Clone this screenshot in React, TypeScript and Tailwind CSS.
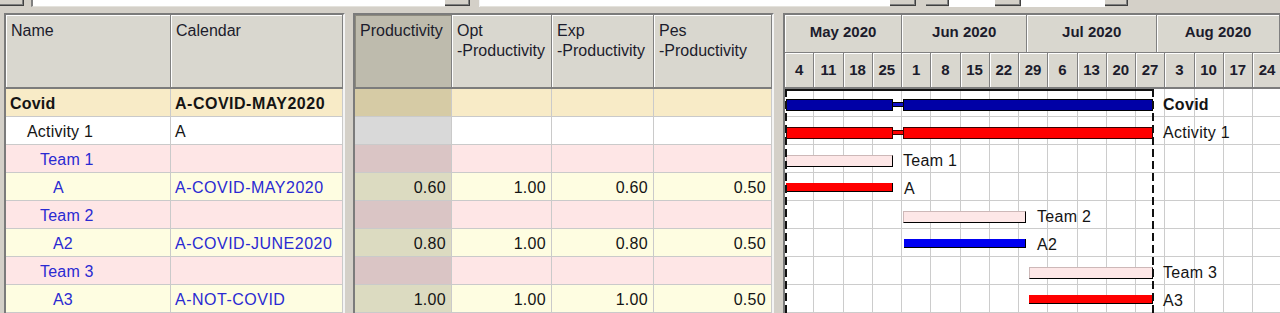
import React from 'react'

type Kind = 'root' | 'activity' | 'team' | 'leaf'

const kindStyle: Record<Kind, { row: string; prod: string; text: string }> = {
  root: { row: 'bg-[#f8ebc7]', prod: 'bg-[#d6cba5]', text: 'text-[#141414] font-bold' },
  activity: { row: 'bg-white', prod: 'bg-[#d9d9d9]', text: 'text-[#141414]' },
  team: { row: 'bg-[#fee6e6]', prod: 'bg-[#dac5c5]', text: 'text-[#2a2ad2]' },
  leaf: { row: 'bg-[#fefde1]', prod: 'bg-[#dcdbc1]', text: 'text-[#2a2ad2]' },
}

const rows: { name: string; indent: string; cal: string; kind: Kind; nums: string[] }[] = [
  { name: 'Covid', indent: 'pl-[4px]', cal: 'A-COVID-MAY2020', kind: 'root', nums: ['', '', '', ''] },
  { name: 'Activity 1', indent: 'pl-[21px]', cal: 'A', kind: 'activity', nums: ['', '', '', ''] },
  { name: 'Team 1', indent: 'pl-[34px]', cal: '', kind: 'team', nums: ['', '', '', ''] },
  { name: 'A', indent: 'pl-[47px]', cal: 'A-COVID-MAY2020', kind: 'leaf', nums: ['0.60', '1.00', '0.60', '0.50'] },
  { name: 'Team 2', indent: 'pl-[34px]', cal: '', kind: 'team', nums: ['', '', '', ''] },
  { name: 'A2', indent: 'pl-[47px]', cal: 'A-COVID-JUNE2020', kind: 'leaf', nums: ['0.80', '1.00', '0.80', '0.50'] },
  { name: 'Team 3', indent: 'pl-[34px]', cal: '', kind: 'team', nums: ['', '', '', ''] },
  { name: 'A3', indent: 'pl-[47px]', cal: 'A-NOT-COVID', kind: 'leaf', nums: ['1.00', '1.00', '1.00', '0.50'] },
]

const days = [4, 11, 18, 25, 1, 8, 15, 22, 29, 6, 13, 20, 27, 3, 10, 17, 24]

type BarKind = 'navy' | 'redSum' | 'team' | 'red' | 'blue'

const barStyle: Record<BarKind, string> = {
  navy: 'top-[10px] h-[12px] bg-[#0000a6] border border-black',
  redSum: 'top-[10px] h-[12px] bg-[#ff0000] border border-[#3a0000]',
  team: 'top-[10px] h-[12px] bg-[#fde7e7] border border-t-[#cdb8b8] border-l-[#cdb8b8] border-b-black border-r-black',
  red: 'top-[10px] h-[9px] bg-[#ff0000] border-b border-r border-black',
  blue: 'top-[10px] h-[9px] bg-[#0000f2] border-b border-r border-black',
}

const linkStyle: Partial<Record<BarKind, string>> = {
  navy: 'bg-[#1010c8] border-y border-black',
  redSum: 'bg-[#ff0000] border-y border-[#3a0000]',
}

const gantt: { kind: BarKind; segs: [number, number][]; label: string; at: number; bold?: boolean }[] = [
  { kind: 'navy', segs: [[1, 107], [118, 250]], label: 'Covid', at: 378, bold: true },
  { kind: 'redSum', segs: [[1, 107], [118, 250]], label: 'Activity 1', at: 378 },
  { kind: 'team', segs: [[1, 107]], label: 'Team 1', at: 118 },
  { kind: 'red', segs: [[1, 107]], label: 'A', at: 119 },
  { kind: 'team', segs: [[118, 123]], label: 'Team 2', at: 252 },
  { kind: 'blue', segs: [[119, 122]], label: 'A2', at: 252 },
  { kind: 'team', segs: [[244, 124]], label: 'Team 3', at: 378 },
  { kind: 'red', segs: [[244, 124]], label: 'A3', at: 378 },
]

const headCell = 'h-full bg-[#d9d7cf] border-r border-[#808080] shadow-[inset_1px_1px_0_#fff] pl-[5px] pt-[6px] leading-[20px] text-[#1c1c2c]'
const btn = 'h-[6px] bg-[#d4d0c8] border-r border-b border-[#404040] shadow-[inset_-1px_-1px_0_#808080]'

function Toolbar() {
  return (
    <div className="h-[7px] flex">
      <div className={`w-[24px] ${btn}`} />
      <div className="ml-[7px] w-[414px] h-[7px] bg-white border-l-2 border-[#808080] border-b border-b-[#e4e2dc]" />
      <div className={`w-[25px] ${btn}`} />
      <div className="w-[10px] h-[7px] border-r border-[#f4f4f4]" />
      <div className="w-[410px] h-[7px] bg-white border-b border-[#e4e2dc]" />
      <div className={`w-[26px] ${btn}`} />
      <div className="w-[10px]" />
      <div className={`w-[23px] ${btn}`} />
      <div className="w-[46px] h-[7px] bg-white" />
      <div className={`w-[26px] ${btn}`} />
      <div className="w-[84px] h-[7px] bg-white" />
      <div className={`w-[23px] ${btn}`} />
    </div>
  )
}

function LeftPane() {
  return (
    <div className="ml-[4px] w-[341px] shrink-0 border-l-2 border-t-2 border-r-2 border-l-[#7b7b7b] border-t-[#7b7b7b] border-r-[#f4f4f4]">
      <div className="h-[74px] flex border-b-2 border-[#7c7c7c]">
        <div className={`w-[165px] ${headCell}`}>Name</div>
        <div className={`w-[172px] ${headCell}`}>Calendar</div>
      </div>
      {rows.map((r) => {
        const k = kindStyle[r.kind]
        return (
          <div key={r.name} className={`h-[28px] flex ${k.row} ${k.text}`}>
            <div className={`w-[165px] flex items-center pt-[3px] border-r border-b border-[#cacaca] tracking-[0.2px] ${r.indent}`}>{r.name}</div>
            <div className={`w-[172px] flex items-center pt-[3px] pl-[4px] border-r border-b border-[#cacaca] tracking-[0.5px] whitespace-nowrap overflow-hidden ${r.kind === 'activity' ? 'text-[#141414]' : ''}`}>
              {r.cal}
            </div>
          </div>
        )
      })}
    </div>
  )
}

function MiddlePane() {
  const widths = ['w-[97px]', 'w-[100px]', 'w-[102px]', 'w-[118px]']
  return (
    <div className="ml-[8px] w-[421px] shrink-0 border-l-2 border-t-2 border-r-2 border-l-[#7b7b7b] border-t-[#7b7b7b] border-r-[#f4f4f4]">
      <div className="h-[74px] flex border-b-2 border-[#7c7c7c]">
        <div className="w-[97px] h-full bg-[#bebbad] border-r border-[#808080] shadow-[inset_1px_1px_0_#8d8a7e] pl-[5px] pt-[6px] leading-[20px] text-[#1c1c2c]">
          Productivity
        </div>
        <div className={`w-[100px] ${headCell}`}>Opt<br />-Productivity</div>
        <div className={`w-[102px] ${headCell}`}>Exp<br />-Productivity</div>
        <div className={`w-[118px] ${headCell}`}>Pes<br />-Productivity</div>
      </div>
      {rows.map((r) => {
        const k = kindStyle[r.kind]
        return (
          <div key={r.name} className={`h-[28px] flex text-[#141414] ${k.row}`}>
            {r.nums.map((n, i) => (
              <div
                key={i}
                className={`${widths[i]} ${i === 0 ? k.prod : ''} flex items-center justify-end pt-[3px] pr-[5px] tracking-[0.3px] border-r border-b border-[#cacaca]`}
              >
                {n}
              </div>
            ))}
          </div>
        )
      })}
    </div>
  )
}

function GanttPane() {
  const dash = 'absolute top-0 bottom-0 w-[2px] bg-[repeating-linear-gradient(to_bottom,#111_0px,#111_8px,transparent_8px,transparent_12px)]'
  return (
    <div className="ml-[9px] flex-1 min-w-0 overflow-hidden border-l-2 border-t-2 border-[#7b7b7b]">
      <div className="h-[74px] border-b-2 border-[#7c7c7c] font-bold text-[15px] text-[#1c1c2c]">
        <div className="h-[38px] flex">
          {[
            ['May 2020', 'w-[117px]'],
            ['Jun 2020', 'w-[125.4px]'],
            ['Jul 2020', 'w-[129.6px]'],
            ['Aug 2020', 'w-[123px]'],
          ].map(([m, w]) => (
            <div
              key={m}
              className={`${w} shrink-0 h-full flex items-center justify-center pb-[3px] bg-[#d9d7cf] border-r border-b border-[#808080] shadow-[inset_1px_1px_0_#fff]`}
            >
              {m}
            </div>
          ))}
        </div>
        <div className="h-[34px] flex">
          {days.map((d, i) => (
            <div
              key={i}
              className="w-[29.25px] shrink-0 h-full flex items-center justify-center bg-[#d9d7cf] border-r border-[#808080] shadow-[inset_1px_1px_0_#fff]"
            >
              {d}
            </div>
          ))}
        </div>
      </div>
      <div className="relative bg-white">
        {gantt.map((g, ri) => (
          <div key={ri} className="relative h-[28px] flex">
            {days.map((_, i) => (
              <div key={i} className="w-[29.25px] shrink-0 h-full border-r border-b border-[#cccccc]" />
            ))}
            {g.segs.map(([l, w], si) => (
              <div key={si} className={`absolute ${barStyle[g.kind]}`} style={{ left: l, width: w }} />
            ))}
            {g.segs.length > 1 && (
              <div
                className={`absolute top-[13px] h-[5px] ${linkStyle[g.kind]}`}
                style={{ left: g.segs[0][0] + g.segs[0][1], width: g.segs[1][0] - g.segs[0][0] - g.segs[0][1] }}
              />
            )}
            <div
              className={`absolute top-[2px] h-full flex items-center text-[16px] text-[#141414] tracking-[0.3px] whitespace-nowrap ${g.bold ? 'font-bold' : ''}`}
              style={{ left: g.at }}
            >
              {g.label}
            </div>
          </div>
        ))}
        <div className="absolute left-0 top-0 bottom-0 w-[369px] pointer-events-none">
          <div className="h-[2px] bg-[#111]" />
          <div className={`${dash} left-0`} />
          <div className={`${dash} left-[367px]`} />
        </div>
      </div>
    </div>
  )
}

export default function App() {
  return (
    <div className="w-[1280px] h-[313px] overflow-hidden bg-[#d4d0c8] font-['Liberation_Sans',Arial,sans-serif] text-[16px]">
      <Toolbar />
      <div className="flex mt-[6px]">
        <LeftPane />
        <MiddlePane />
        <GanttPane />
      </div>
    </div>
  )
}
